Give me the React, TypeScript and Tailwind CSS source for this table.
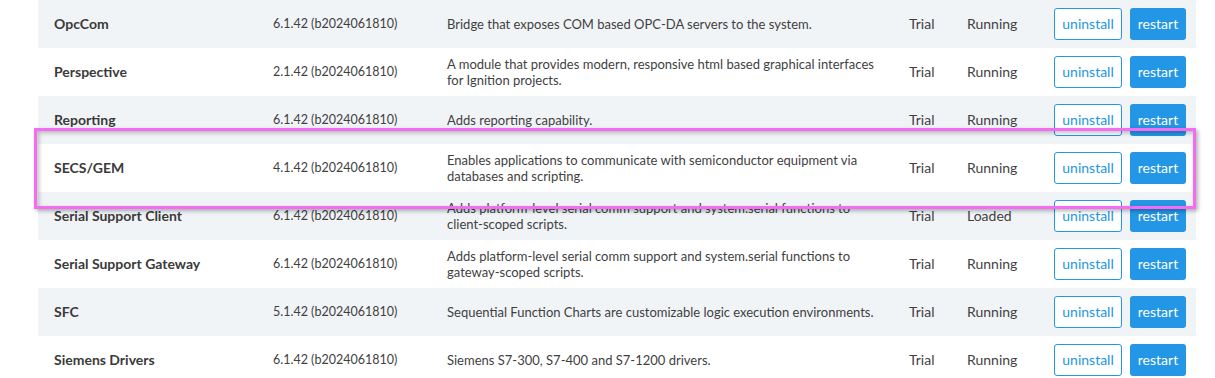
import React from "react";

type Module = {
  name: string;
  version: string;
  desc: string;
  license: string;
  state: string;
};

const MODULES: Module[] = [
  { name: "OpcCom", version: "6.1.42 (b2024061810)", desc: "Bridge that exposes COM based OPC-DA servers to the system.", license: "Trial", state: "Running" },
  { name: "Perspective", version: "2.1.42 (b2024061810)", desc: "A module that provides modern, responsive html based graphical interfaces\nfor Ignition projects.", license: "Trial", state: "Running" },
  { name: "Reporting", version: "6.1.42 (b2024061810)", desc: "Adds reporting capability.", license: "Trial", state: "Running" },
  { name: "SECS/GEM", version: "4.1.42 (b2024061810)", desc: "Enables applications to communicate with semiconductor equipment via\ndatabases and scripting.", license: "Trial", state: "Running" },
  { name: "Serial Support Client", version: "6.1.42 (b2024061810)", desc: "Adds platform-level serial comm support and system.serial functions to\nclient-scoped scripts.", license: "Trial", state: "Loaded" },
  { name: "Serial Support Gateway", version: "6.1.42 (b2024061810)", desc: "Adds platform-level serial comm support and system.serial functions to\ngateway-scoped scripts.", license: "Trial", state: "Running" },
  { name: "SFC", version: "5.1.42 (b2024061810)", desc: "Sequential Function Charts are customizable logic execution environments.", license: "Trial", state: "Running" },
  { name: "Siemens Drivers", version: "6.1.42 (b2024061810)", desc: "Siemens S7-300, S7-400 and S7-1200 drivers.", license: "Trial", state: "Running" },
];

const ModuleRow = ({ m, striped }: { m: Module; striped: boolean }) => (
  <div
    className={`grid grid-cols-[219px_174px_462px_58px_87px_1fr] items-center h-[48px] ${striped ? "bg-[#f1f4f7]" : "bg-white"}`}
  >
    <div className="pl-4 pb-[2px] font-bold text-[#3a3a3a]">{m.name}</div>
    <div className="pl-4 text-[12.5px]">{m.version}</div>
    <div className="pl-4 whitespace-pre leading-4 text-[13px]">{m.desc}</div>
    <div className="pl-4 pb-[2px]">{m.license}</div>
    <div className="pl-4 pb-[2px]">{m.state}</div>
    <div className="pl-4 flex gap-2">
      <button className="h-8 w-[68px] pb-[2px] rounded-[3px] border border-[#2396e5] bg-white text-[#2396e5]">
        uninstall
      </button>
      <button className="h-8 w-[56px] pb-[2px] rounded-[3px] bg-[#2396e5] text-white">
        restart
      </button>
    </div>
  </div>
);

export default function App() {
  return (
    <div
      className="relative w-[1215px] h-[378px] overflow-hidden bg-white text-[14px] text-[#3f3f3f]"
      style={{ fontFamily: "Lato, 'Liberation Sans', sans-serif" }}
    >
      <div className="ml-[38px] w-[1158px] flex flex-col">
        {MODULES.map((m, i) => (
          <ModuleRow key={m.name} m={m} striped={i % 2 === 0} />
        ))}
      </div>
      {/* highlight box drawn over the SECS/GEM row */}
      <div className="absolute left-[34px] top-[128px] w-[1162px] h-[81px] border-[3px] border-[#f36cf1] shadow-[2px_2px_4px_rgba(0,0,0,0.3),inset_2px_2px_4px_rgba(0,0,0,0.25)] pointer-events-none" />
    </div>
  );
}
